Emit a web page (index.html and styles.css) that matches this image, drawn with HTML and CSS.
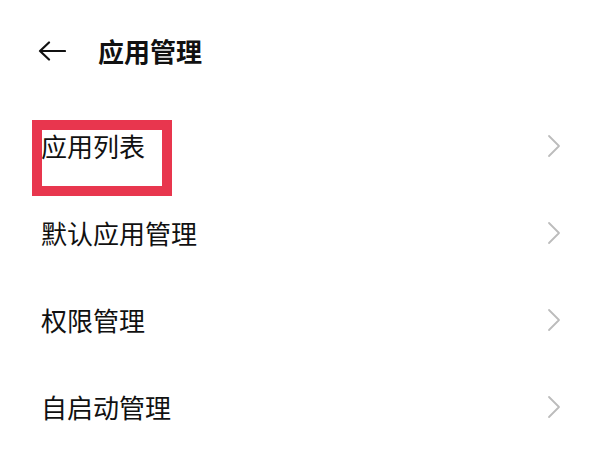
FILE: index.html
```html
<!DOCTYPE html>
<html lang="zh-CN">
<head>
<meta charset="utf-8">
<title>应用管理</title>
<link rel="stylesheet" href="styles.css">
</head>
<body>
<div class="page">
  <header class="header">
    <svg class="back" width="28" height="20" viewBox="0 0 28 20" aria-hidden="true">
      <path d="M27 10H2M11 1.5L2 10l9 8.5" fill="none" stroke="#111" stroke-width="2.2" stroke-linecap="round" stroke-linejoin="round"/>
    </svg>
    <h1 class="title">应用管理</h1>
  </header>
  <ul class="list">
    <li class="row">
      <span class="label">应用列表</span>
      <svg class="chev" width="14" height="24" viewBox="0 0 14 24" aria-hidden="true"><path d="M2 2l10 10L2 22" fill="none" stroke="#bcbcbc" stroke-width="1.8" stroke-linecap="round" stroke-linejoin="round"/></svg>
      <span class="highlight"></span>
    </li>
    <li class="row">
      <span class="label">默认应用管理</span>
      <svg class="chev" width="14" height="24" viewBox="0 0 14 24" aria-hidden="true"><path d="M2 2l10 10L2 22" fill="none" stroke="#bcbcbc" stroke-width="1.8" stroke-linecap="round" stroke-linejoin="round"/></svg>
    </li>
    <li class="row">
      <span class="label">权限管理</span>
      <svg class="chev" width="14" height="24" viewBox="0 0 14 24" aria-hidden="true"><path d="M2 2l10 10L2 22" fill="none" stroke="#bcbcbc" stroke-width="1.8" stroke-linecap="round" stroke-linejoin="round"/></svg>
    </li>
    <li class="row">
      <span class="label">自启动管理</span>
      <svg class="chev" width="14" height="24" viewBox="0 0 14 24" aria-hidden="true"><path d="M2 2l10 10L2 22" fill="none" stroke="#bcbcbc" stroke-width="1.8" stroke-linecap="round" stroke-linejoin="round"/></svg>
    </li>
  </ul>
</div>
</body>
</html>
```
FILE: styles.css
```css
html, body {
  margin: 0;
  padding: 0;
  background: #ffffff;
}
body {
  font-family: "Noto Sans CJK SC", "Noto Sans", sans-serif;
  color: #111111;
}
.page {
  width: 600px;
  height: 450px;
  overflow: hidden;
}
.header {
  height: 102px;
  display: flex;
  align-items: center;
  padding-left: 38px;
  gap: 32px;
  box-sizing: border-box;
}
.back {
  display: block;
  flex: none;
}
.title {
  margin: 0;
  font-size: 26px;
  font-weight: 700;
  line-height: 1;
}
.list {
  list-style: none;
  margin: 0;
  padding: 0;
}
.row {
  position: relative;
  height: 87px;
  display: flex;
  align-items: center;
  justify-content: space-between;
  padding: 0 39px 0 41px;
  box-sizing: border-box;
}
.label {
  font-size: 26px;
  line-height: 1;
  font-weight: 400;
}
.chev {
  display: block;
  flex: none;
}
.highlight {
  position: absolute;
  left: 32px;
  top: 18px;
  width: 140px;
  height: 76px;
  border: 10px solid #e8364e;
  box-sizing: border-box;
  pointer-events: none;
}
```
